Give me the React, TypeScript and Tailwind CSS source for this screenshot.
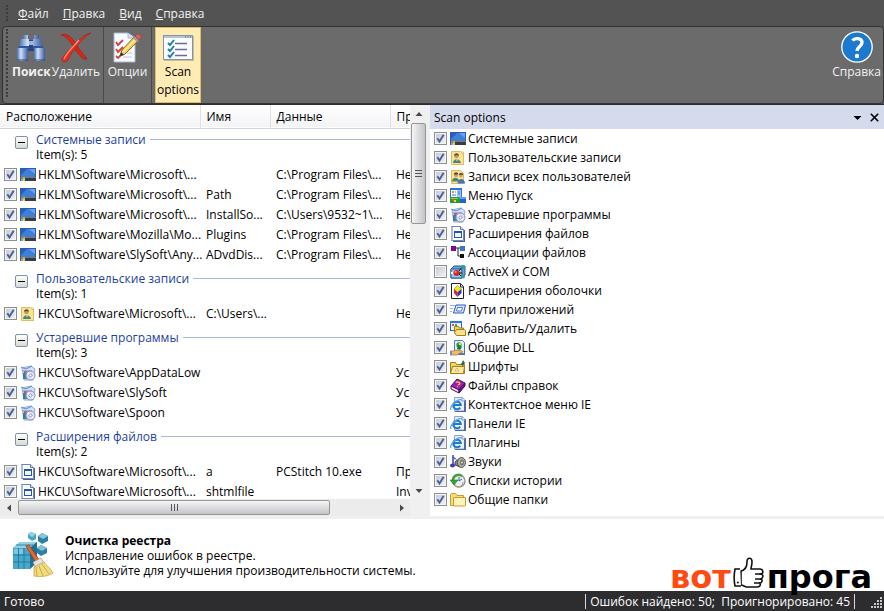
import type { ReactNode } from "react";
import clsx from "clsx";

type IconName =
  | "monitor" | "user" | "users" | "start" | "old" | "file" | "assoc" | "com" | "shell" | "path"
  | "addremove" | "dll" | "fonts" | "help" | "ie" | "sound" | "history" | "folder";

const drawings: Record<IconName, ReactNode> = {
  monitor: (
    <>
      <rect x="0" y="1" width="16" height="13" fill="#2a5db0" />
      <path d="M1 2h14v8H1z" fill="#3f7fd8" />
      <path d="M1 2h6L1 8z" fill="#2a5fb8" />
      <path d="M9 2h6v5z" fill="#6ba4ee" />
      <path d="M5 10h11v4H5z" fill="#3a3a3f" />
      <path d="M5 10h11v1H5z" fill="#77787e" />
      <path d="M1 10h2v2H1z" fill="#e8642c" />
      <path d="M3 10h2v2H3z" fill="#8fd04a" />
      <path d="M1 12h2v2H1z" fill="#5ab4f4" />
      <path d="M3 12h2v2H3z" fill="#f6cf3c" />
    </>
  ),
  user: (
    <>
      <path d="M1.500 1.500h9l3 3v10h-12z" fill="#f8e593" stroke="#dcbc5c" />
      <path d="M11.500 1.500l2 1v12" fill="none" stroke="#dcbc5c" />
      <circle cx="6.500" cy="6" r="2.300" fill="#c39a66" />
      <path d="M4 5.800c0-3.500 5-3.500 5 0L7 5z" fill="#5a4730" />
      <path d="M3 13c0-5 7-5 8 0z" fill="#4f8471" />
      <path d="M6 9.500l1 2 1-2z" fill="#e6efe0" />
    </>
  ),
  users: (
    <>
      <path d="M1.500 1.500h9l3 3v10h-12z" fill="#f8e593" stroke="#dcbc5c" />
      <circle cx="6" cy="6" r="2" fill="#c39a66" />
      <path d="M3.800 5.600c0-3 4.400-3 4.400 0z" fill="#5a4730" />
      <path d="M2 12.500c0-5 7-5 7 0z" fill="#4f8471" />
      <circle cx="11" cy="6.500" r="2" fill="#d1a673" />
      <path d="M8.800 6c0-3 4.400-3 4.400 0z" fill="#6b573e" />
      <path d="M7.500 14.500c0-6 7.500-6 7.500 0z" fill="#4377b5" />
    </>
  ),
  start: (
    <>
      <path d="M0 0h12v11H0z" fill="#2f74d8" />
      <path d="M1 2h6v8H1z" fill="#fff" />
      <path d="M7 2h4v8H7z" fill="#9cc6f6" />
      <path d="M2 3h2v2H2z" fill="#e08a30" />
      <path d="M5 4h1M2 7h4M8 4h2M8 6h2" stroke="#2f74d8" />
      <path d="M0 9h8c3 0 4 3 2 6H0z" fill="#2c9a33" />
      <path d="M1 10h7v1H1z" fill="#7fd07a" />
      <path d="M2 11h2v2H2z" fill="#e8502a" />
      <path d="M4 12h2v2H4z" fill="#f6d53c" />
      <path d="M10 9h6v6h-6z" fill="#1f64cf" />
      <path d="M10 9h6v2h-6z" fill="#62a0ee" />
    </>
  ),
  old: (
    <>
      <path d="M2 3l9-2 4 3-2 11H4z" fill="#cfe0f7" stroke="#8fabd9" />
      <path d="M1 2l5 2 6-3M3 6h9" stroke="#5f8ad0" fill="none" />
      <path d="M3 8h3v6H3z" fill="#3f72c4" />
      <path d="M5 9h3v5H5z" fill="#35a045" />
      <path d="M4 6h3v2H4z" fill="#e0574c" />
      <circle cx="10.500" cy="10.500" r="4.500" fill="#dcdff4" stroke="#8a8ec4" />
      <path d="M8 8l5 5" stroke="#fff" strokeWidth="2" />
      <circle cx="10.500" cy="10.500" r="1.500" fill="#fff" stroke="#8b90c4" />
    </>
  ),
  file: (
    <>
      <path d="M1.500.5h9l3 3v11h-12z" fill="#fff" stroke="#6f86bd" />
      <path d="M10.500.5v3h3" fill="#dbe4f6" stroke="#5a72ad" />
      <path d="M1 1h2v13H1z" fill="#a9bbe4" />
      <rect x="4.500" y="5.500" width="7" height="6" fill="#f2f6ff" stroke="#2554b4" />
      <path d="M4 5h8v2H4z" fill="#2554b4" />
      <path d="M14 4h1v12H3v-1h11z" fill="#4b5f9a" />
    </>
  ),
  assoc: (
    <>
      <path d="M5 3h5M8 3v8h2" stroke="#222" fill="none" />
      <path d="M1 1h5v5H1z" fill="#7d0a86" />
      <path d="M10 1h5v5h-5z" fill="#3d74cc" />
      <path d="M10 9h4v4h-4z" fill="#111" />
    </>
  ),
  com: (
    <>
      <path d="M1 5l3-3h11v9l-3 3H1z" fill="#6ea3dc" stroke="#2b568f" />
      <path d="M1 5h11v9H1z" fill="#9bc5ee" stroke="#2b568f" />
      <circle cx="6.500" cy="9" r="3" fill="#d52a1e" />
      <circle cx="5.700" cy="8" r="1" fill="#ff9a86" />
      <path d="M9 9h3M12 3l-3 4M12 13l-3-3" stroke="#111" />
      <circle cx="13" cy="3" r="2" fill="#25a58a" />
      <circle cx="13" cy="12.500" r="2" fill="#25a58a" />
      <path d="M1 8h2v2H1z" fill="#fff" />
    </>
  ),
  shell: (
    <>
      <path d="M1.500.5h9l3 3v12h-12z" fill="#fff" stroke="#222" />
      <path d="M10.500 1v3h3" fill="none" stroke="#222" />
      <path d="M7.500 2.500l4 3.500-4 3.500L4 6z" fill="#f7e626" stroke="#8a7a10" strokeWidth=".5" />
      <path d="M4 6l3.500 3.500V14L4 10z" fill="#d8231d" />
      <path d="M11.500 6l-4 3.500V14l4-4z" fill="#2633c8" />
    </>
  ),
  path: (
    <>
      <path d="M0 3.500h5M0 6.500h3M0 9.500h2" stroke="#9db1d6" />
      <path d="M6 3h9.500l-2 8H3.500z" fill="#dce8fb" stroke="#2857b8" />
      <path d="M7.500 5.500h5l-1 3.500H6.500z" fill="#fff" stroke="#4c7bd4" />
    </>
  ),
  addremove: (
    <>
      <rect x=".5" y=".5" width="11" height="9" fill="#e9f1fd" stroke="#2464cf" />
      <path d="M0 0h12v2H0z" fill="#2f77e4" />
      <path d="M2 3h2v2H2z" fill="#e35632" />
      <path d="M5 3h2v2H5z" fill="#47a447" />
      <path d="M4.500 5.500h4l1 1.500h4v5h-9z" fill="#f4d462" stroke="#a87b16" />
      <path d="M6.500 8.500h8l1 1v5h-9l-2-3z" fill="#fbe48a" stroke="#a87b16" />
    </>
  ),
  dll: (
    <>
      <path d="M4.500.5h8l2 2v11h-10z" fill="#e4effd" stroke="#5c7cb8" />
      <path d="M14 3h1v12H8v-1h6z" fill="#566fa5" />
      <circle cx="9" cy="5" r="2.700" fill="#34a03c" />
      <path d="M8 5l4 2-2 3-3-1z" fill="#1d7a36" />
      <path d="M9 3h2v2H9z" fill="#c7e46c" />
      <path d="M0 11h3l3-1 6 1c2 1 0 2-2 2l-3 2H0z" fill="#ecba72" stroke="#a5702e" strokeWidth=".7" />
      <path d="M0 11h2v4H0z" fill="#6d8fc9" />
    </>
  ),
  fonts: (
    <>
      <path d="M.5 3.500h5l1 2h8v9H.5z" fill="#f6d566" stroke="#a67b1e" />
      <path d="M2.500 7.500h12l-1 7H.5z" fill="#fdeb9c" stroke="#a67b1e" />
      <path d="M10 5c2 0 2-2 3-4l2 3-2 3z" fill="#2e6b39" />
      <path d="M5 12l2-3 2 3z" fill="#fff" stroke="#b98f2c" strokeWidth=".6" />
    </>
  ),
  help: (
    <>
      <path d="M7 1l8 4-6 7-8-4z" fill="#a31fb2" stroke="#4f0a5e" />
      <path d="M1 8l8 4v3L1 11z" fill="#f0e6f2" stroke="#4f0a5e" />
      <path d="M15 5v3l-6 7v-3z" fill="#6d1080" stroke="#4f0a5e" />
      <path d="M6 4.500c1-1.500 5 0 3.500 1.500L8 7M7 8.500l.8.400" fill="none" stroke="#f8d63c" strokeWidth="1.200" />
    </>
  ),
  ie: (
    <>
      <path d="M4.500.5h8l2 2.500v11h-10z" fill="#eaf1fd" stroke="#8aa2d4" />
      <path d="M14 3h2v12H5v-1h9z" fill="#5269a4" />
      <path d="M12 1v3h3" fill="#fff" stroke="#7a93c8" />
      <path d="M10.200 10.600A3.800 3.800 0 1 1 10.800 8H4" fill="none" stroke="#1c78d2" strokeWidth="2" />
      <path d="M1 13C-1 10 7 1 12 3" fill="none" stroke="#55a9ea" strokeWidth="1.200" />
    </>
  ),
  sound: (
    <>
      <path d="M3 1v9" stroke="#3b3fae" strokeWidth="1.500" />
      <path d="M3 1c1 3 4 3 4 6-1-2-3-2-4-2z" fill="#5a60d0" />
      <ellipse cx="2.500" cy="11.500" rx="2.500" ry="2" fill="#3b3fae" />
      <path d="M5 8l5-4v9l-5-2z" fill="#85858a" stroke="#4b4b50" />
      <ellipse cx="11.500" cy="8.500" rx="4" ry="5" fill="#b5b2a8" stroke="#55534e" />
      <ellipse cx="12" cy="8.500" rx="2" ry="3" fill="#77746a" />
      <circle cx="12" cy="8.500" r="1" fill="#e2dfd0" />
    </>
  ),
  history: (
    <>
      <circle cx="9" cy="8" r="6" fill="#e8f0f4" stroke="#8b979e" strokeWidth="1.400" />
      <path d="M9 4v4l3-2" fill="none" stroke="#3b5f8a" />
      <path d="M13 9a5 5 0 0 1-8 4" fill="none" stroke="#b9a266" />
      <path d="M12 3C8 0 3 3 3 7" fill="none" stroke="#3fa33c" strokeWidth="2.400" />
      <path d="M0 7h8l-4 5z" fill="#3fa33c" stroke="#1f7424" strokeWidth=".6" />
    </>
  ),
  folder: (
    <>
      <path d="M.5 2.500l1-1h4l1.500 2h6.500v10H.5z" fill="#f8dc78" stroke="#c99b30" />
      <path d="M3.500 5.500h12v8l-1 .5h-11z" fill="#fdf4b8" stroke="#c99b30" />
    </>
  ),
};

function Icon({ name }: { name: IconName }) {
  return (
    <svg viewBox="0 0 16 16" className="h-4 w-4 shrink-0" aria-hidden="true">
      {drawings[name]}
    </svg>
  );
}

function Check({ id, label, checked = true }: { id: string; label?: string; checked?: boolean }) {
  return (
    <span className="grid h-[13px] w-[13px] shrink-0">
      <input
        id={id}
        type="checkbox"
        defaultChecked={checked}
        aria-label={label}
        className="peer col-start-1 row-start-1 h-[13px] w-[13px] appearance-none border border-[#8e8f8f] bg-linear-to-br from-[#c3c8cf] to-[#f4f5f6] outline outline-1 -outline-offset-2 outline-[#f4f4f4]"
      />
      <svg
        viewBox="0 0 13 13"
        aria-hidden="true"
        className="pointer-events-none invisible col-start-1 row-start-1 h-[13px] w-[13px] peer-checked:visible"
      >
        <path d="M3.300 6.300l2.200 3.200L9.700 2.800" fill="none" stroke="#4a5f97" strokeWidth="1.900" />
      </svg>
    </span>
  );
}

const menu = ["Файл", "Правка", "Вид", "Справка"];

interface Entry {
  key: string;
  name?: string;
  data?: string;
  problem: string;
}

const groups: { title: string; icon: IconName; entries: Entry[] }[] = [
  {
    title: "Системные записи",
    icon: "monitor",
    entries: [
      { key: "HKLM\\Software\\Microsoft\\...", data: "C:\\Program Files\\...", problem: "Не" },
      { key: "HKLM\\Software\\Microsoft\\...", name: "Path", data: "C:\\Program Files\\...", problem: "Не" },
      { key: "HKLM\\Software\\Microsoft\\...", name: "InstallSo...", data: "C:\\Users\\9532~1\\...", problem: "Не" },
      { key: "HKLM\\Software\\Mozilla\\Mo...", name: "Plugins", data: "C:\\Program Files\\...", problem: "Не" },
      { key: "HKLM\\Software\\SlySoft\\Any...", name: "ADvdDis...", data: "C:\\Program Files\\...", problem: "Не" },
    ],
  },
  {
    title: "Пользовательские записи",
    icon: "user",
    entries: [{ key: "HKCU\\Software\\Microsoft\\...", name: "C:\\Users\\...", problem: "Не" }],
  },
  {
    title: "Устаревшие программы",
    icon: "old",
    entries: [
      { key: "HKCU\\Software\\AppDataLow", problem: "Ус" },
      { key: "HKCU\\Software\\SlySoft", problem: "Ус" },
      { key: "HKCU\\Software\\Spoon", problem: "Ус" },
    ],
  },
  {
    title: "Расширения файлов",
    icon: "file",
    entries: [
      { key: "HKCU\\Software\\Microsoft\\...", name: "a", data: "PCStitch 10.exe", problem: "Пр" },
      { key: "HKCU\\Software\\Microsoft\\...", name: "shtmlfile", problem: "Inv" },
    ],
  },
];

const options: { label: string; icon: IconName; off?: boolean }[] = [
  { label: "Системные записи", icon: "monitor" },
  { label: "Пользовательские записи", icon: "user" },
  { label: "Записи всех пользователей", icon: "users" },
  { label: "Меню Пуск", icon: "start" },
  { label: "Устаревшие программы", icon: "old" },
  { label: "Расширения файлов", icon: "file" },
  { label: "Ассоциации файлов", icon: "assoc" },
  { label: "ActiveX и COM", icon: "com", off: true },
  { label: "Расширения оболочки", icon: "shell" },
  { label: "Пути приложений", icon: "path" },
  { label: "Добавить/Удалить", icon: "addremove" },
  { label: "Общие DLL", icon: "dll" },
  { label: "Шрифты", icon: "fonts" },
  { label: "Файлы справок", icon: "help" },
  { label: "Контектсное меню IE", icon: "ie" },
  { label: "Панели IE", icon: "ie" },
  { label: "Плагины", icon: "ie" },
  { label: "Звуки", icon: "sound" },
  { label: "Списки истории", icon: "history" },
  { label: "Общие папки", icon: "folder" },
];

function Binoculars() {
  return (
    <svg viewBox="0 0 32 32" className="h-8 w-8" aria-hidden="true">
      <defs>
        <linearGradient id="barrel">
          <stop offset="0" stopColor="#4a6fb4" />
          <stop offset=".35" stopColor="#cfe0fa" />
          <stop offset="1" stopColor="#3a5c9e" />
        </linearGradient>
      </defs>
      <path d="M13 9h6v11h-6z" fill="#2a4580" />
      <path d="M14 10h4v4h-4z" fill="#9db7e4" />
      <path d="M8 4h5v4H8zM19 4h5v4h-5z" fill="url(#barrel)" />
      <path d="M6 8h8v8H4zM18 8h8l2 8H18z" fill="url(#barrel)" />
      <path d="M4 15h10v3H3zM18 15h10l1 3H18z" fill="#35579a" />
      <rect x="2" y="17" width="11" height="13" rx="1" fill="url(#barrel)" />
      <rect x="19" y="17" width="11" height="13" rx="1" fill="url(#barrel)" />
      <path d="M2 29h11M19 29h11" stroke="#29447e" />
    </svg>
  );
}

function Cross() {
  return (
    <svg viewBox="0 0 32 32" className="h-8 w-8" aria-hidden="true">
      <path d="M1 4C8 1 13 8 18 16c3 5 7 9 9 12-4 1-6-2-11-8C11 12 8 6 1 4z" fill="#d92516" stroke="#a51a0e" strokeWidth=".6" />
      <path d="M31 2C24 3 18 10 12 16 7 21 3 25 2 29c1 3 5 2 6 0 2-5 5-9 9-14C21 10 25 5 31 2z" fill="#e5311f" stroke="#a51a0e" strokeWidth=".6" />
      <path d="M4 28c3-7 9-12 15-19" fill="none" stroke="#ff8a72" strokeWidth="1.400" />
    </svg>
  );
}

function Options() {
  return (
    <svg viewBox="0 0 32 32" className="h-8 w-8" aria-hidden="true">
      <path d="M3 2h14l7 5v24H3z" fill="#f8fbff" stroke="#a7b7cf" />
      <path d="M17 2v5h7" fill="#d4e0f0" stroke="#a7b7cf" />
      <path d="M12 17h9M12 22h9M12 26h9" stroke="#b9c7da" />
      <path d="M5 11l2 3 5-5M5 18l2 3 5-5M5 25l2 2 4-4" fill="none" stroke="#d3413d" strokeWidth="1.800" />
      <path d="M9 25l2-6L24 5l4 4-14 14z" fill="#f3cf5b" stroke="#8d6a22" />
      <path d="M12 21L26 7" stroke="#fff0a8" strokeWidth="1.500" />
      <path d="M9 25l1-4 3 3z" fill="#3a2f28" />
      <path d="M22 7l4 4 2-2-4-4z" fill="#8f9b9e" />
      <path d="M24 5l2-2c2-1 5 2 4 4l-2 2z" fill="#d5615c" stroke="#8e3431" strokeWidth=".6" />
    </svg>
  );
}

function Checklist() {
  return (
    <svg viewBox="0 0 32 32" className="h-8 w-8" aria-hidden="true">
      <path d="M2 5h30v25H2z" fill="#8a8674" opacity=".45" />
      <rect x="1.500" y="4.500" width="29" height="24" fill="#fafcff" stroke="#8794a6" />
      <path d="M2 5h28v2H2z" fill="#b6c3d4" />
      <path d="M23 6h1M25.500 6h1M28 6h1" stroke="#4f5d73" />
      <path d="M13 12.500h12M13 18.500h12M13 24.500h12" stroke="#6b6b95" strokeWidth="1.500" />
      <path d="M6 12l2 2 4-5M6 18l2 2 4-5M6 24l2 2 4-5" fill="none" stroke="#1d7fae" strokeWidth="2" />
    </svg>
  );
}

function Question() {
  return (
    <svg viewBox="0 0 32 32" className="h-8 w-8" aria-hidden="true">
      <circle cx="16" cy="16" r="15.200" fill="#1a7ad0" stroke="#fff" strokeWidth="1.300" />
      <path d="M11.500 9.500C14 6.500 21 7 21 11.500c0 4-5 4-5 8.500" fill="none" stroke="#fff" strokeWidth="3.400" />
      <circle cx="16" cy="25" r="2.200" fill="#fff" />
    </svg>
  );
}

function RegistryBroom() {
  return (
    <svg viewBox="0 0 44 48" className="h-12 w-11 shrink-0" aria-hidden="true">
      <path d="M2 17l7-6h17v20l-7 7H2z" fill="#2b83a8" />
      <path d="M2 17h17v21H2z" fill="#47a8cd" />
      <path d="M9 11h17l-7 6H2z" fill="#8ed0e6" />
      <path d="M19 17l7-6v20l-7 7z" fill="#23708f" />
      <path d="M7.500 17v21M13 17v21M2 24h17l7-7M2 31h17l7-7M5 14h17" fill="none" stroke="#256f91" strokeWidth=".8" />
      <path d="M3 18h4v5H3zM8 18h4v5H8z" fill="#7cc6e0" />
      <path d="M20 1l5 2v5l-4 2-4-3v-4z" fill="#4aa7ca" />
      <path d="M20 1l5 2-4 3-4-3z" fill="#93d2e6" />
      <path d="M31 2l6 3v5l-6 3-4-3V5z" fill="#2c7fa3" />
      <path d="M31 2l6 3-5 3-5-3z" fill="#83c9e0" />
      <path d="M30 14l6 3v5l-6 3-4-3v-5z" fill="#2c7fa3" />
      <path d="M30 14l6 3-5 3-5-3z" fill="#79c3dc" />
      <path d="M15 15l3-1 11 16-4 2z" fill="#e06a35" stroke="#8c3513" strokeWidth=".7" />
      <path d="M22 31l8-4 3 5-9 4z" fill="#e3e4e6" stroke="#888" strokeWidth=".6" />
      <path d="M23 36l10-5c3 4 7 7 9 11-6 4-13 4-19 3z" fill="#f3dc80" stroke="#c09a36" strokeWidth=".7" />
      <path d="M25 36l1 9M28 35l4 10M31 33l7 10" stroke="#c09a36" strokeWidth=".8" />
    </svg>
  );
}

function Thumb() {
  return (
    <svg viewBox="0 0 32 32" className="h-8 w-8" aria-hidden="true">
      <path
        d="M8 14c4-1 6-5 6-9 0-5 5-5 5 0 0 3-1 5-1 7h9c3 0 4 4 1 5 3 1 2 4 0 5 2 1 1 4-1 4 1 3-1 4-3 4H14c-3 0-3-2-6-2z"
        fill="#fff" stroke="#111" strokeWidth="1.600"
      />
      <path d="M22 17h6M22 22h6M21 26h6" stroke="#111" strokeWidth="1.400" />
      <path d="M7 12H2c-1 5-1 12 0 17h6" fill="#fff" stroke="#111" strokeWidth="1.600" />
      <circle cx="4.800" cy="25.500" r="1" fill="#111" />
    </svg>
  );
}

function ToolButton({ icon, bold, children }: { icon: ReactNode; bold?: boolean; children: ReactNode }) {
  return (
    <button type="button" className="flex flex-col items-center pt-1 text-[#f2f2f2]">
      {icon}
      <span className={clsx("leading-[18px] whitespace-nowrap", bold && "font-bold")}>{children}</span>
    </button>
  );
}

function Arrow({ d }: { d: string }) {
  return (
    <svg viewBox="0 0 8 8" className="h-2 w-2" aria-hidden="true">
      <path d={d} fill="#4a4a4a" />
    </svg>
  );
}

export default function App() {
  return (
    <div className="flex h-screen min-w-[640px] flex-col bg-[#f0f0f0] font-['Open_Sans','Noto_Sans',sans-serif] text-[12px] leading-[15px] text-black">
      <header className="bg-[#535353]">
        <nav className="flex h-[26px] items-center pl-1.5">
          <span className="h-4 border-l-2 border-dotted border-[#3c3c3c]" />
          <div className="flex gap-[14px] pl-2.5">
            {menu.map((item) => (
              <button key={item} type="button" className="text-[#f2f2f2]">
                <span className="underline">{item[0]}</span>
                {item.slice(1)}
              </button>
            ))}
          </div>
        </nav>
        <div className="ml-0.5 flex h-[78px] rounded border border-[#333] bg-[#6b6b6b]">
          <span className="my-0.5 ml-[3px] h-[68px] border-l-2 border-dotted border-[#3c3c3c]" />
          <div className="flex grow pl-1">
            <div className="flex w-[88px] justify-between">
              <ToolButton icon={<Binoculars />} bold>Поиск</ToolButton>
              <ToolButton icon={<Cross />}>Удалить</ToolButton>
            </div>
            <div className="ml-[3px] flex w-[49px] justify-center border-x border-[#4a4a4a]">
              <ToolButton icon={<Options />}>Опции</ToolButton>
            </div>
            <button
              type="button"
              className="ml-[3px] flex w-[46px] flex-col items-center border border-[#e3bd66] bg-[#ffecb5] pt-[3px] leading-[18px]"
            >
              <Checklist />
              Scan
              <br />
              options
            </button>
          </div>
          <div className="flex pr-0.5">
            <ToolButton icon={<Question />}>Справка</ToolButton>
          </div>
        </div>
        <div className="h-px bg-[#2d2a32]" />
      </header>

      <main className="flex min-h-0 flex-1">
        <section className="flex w-[430px] shrink-0 flex-col pr-[3px]">
          <div className="flex min-h-0 flex-1">
            <div className="min-w-0 flex-1 overflow-hidden bg-white">
              <table className="w-[490px] table-fixed border-collapse text-left whitespace-nowrap">
                <colgroup>
                  <col className="w-[200px]" />
                  <col className="w-[70px]" />
                  <col className="w-[120px]" />
                  <col />
                </colgroup>
                <thead>
                  <tr className="h-[23px] border-b border-[#d5d5d5] bg-linear-to-b from-white to-[#f3f4f6]">
                    {["Расположение", "Имя", "Данные", "Проблема"].map((h) => (
                      <th key={h} className="border-r border-[#dfe1e4] p-0 pl-1.5 font-normal">{h}</th>
                    ))}
                  </tr>
                </thead>
                {groups.map((group, g) => (
                  <tbody key={group.title}>
                    <tr>
                      <th colSpan={4} className={clsx("p-0 pb-[3px] pl-[15px] font-normal", g === 0 ? "pt-[3px]" : "pt-[6px]")}>
                        <div className="flex items-start gap-2">
                          <button
                            type="button"
                            aria-label="Свернуть"
                            className="mt-1 grid h-[13px] w-[13px] place-items-center rounded-xs border border-[#7f93a8] bg-linear-to-b from-white to-[#d9d9d2]"
                          >
                            <span className="h-px w-[7px] bg-black" />
                          </button>
                          <div className="min-w-0 flex-1">
                            <div className="flex items-center gap-1">
                              <span className="text-[#1e3f9c]">{group.title}</span>
                              <span className="h-px flex-1 bg-[#a9b9dd]" />
                            </div>
                            <div>Item(s): {group.entries.length}</div>
                          </div>
                        </div>
                      </th>
                    </tr>
                    {group.entries.map((entry, i) => (
                      <tr key={i} className="h-5">
                        <td className="p-0 pl-1">
                          <div className="flex items-center">
                            <Check id={`entry-${g}-${i}`} label={entry.key} />
                            <span className="mr-0.5 ml-[3px] flex"><Icon name={group.icon} /></span>
                            {entry.key}
                          </div>
                        </td>
                        <td className="p-0 pl-1.5">{entry.name}</td>
                        <td className="p-0 pl-1.5">{entry.data}</td>
                        <td className="p-0 pl-1.5">{entry.problem}</td>
                      </tr>
                    ))}
                  </tbody>
                ))}
              </table>
            </div>
            <div className="flex w-[17px] flex-col bg-[#f0f0f0]">
              <button type="button" aria-label="Вверх" className="grid h-[18px] place-items-center">
                <Arrow d="M.5 6L4 2l3.500 4z" />
              </button>
              <div className="flex-1 px-px">
                <div className="flex h-[101px] flex-col items-center justify-center gap-0.5 rounded-xs border border-[#979797] bg-linear-to-r from-[#f5f5f5] to-[#c4c5c9]">
                  <span className="h-px w-[7px] bg-[#555]" />
                  <span className="h-px w-[7px] bg-[#555]" />
                  <span className="h-px w-[7px] bg-[#555]" />
                </div>
              </div>
              <button type="button" aria-label="Вниз" className="grid h-[17px] place-items-center">
                <Arrow d="M.5 2h7L4 6z" />
              </button>
            </div>
          </div>
          <div className="mr-[17px] flex h-[17px] bg-[#ececec]">
            <button type="button" aria-label="Влево" className="grid w-[18px] place-items-center">
              <Arrow d="M6 .5v7L2 4z" />
            </button>
            <div className="flex-1 py-px">
              <div className="flex h-[15px] w-[312px] items-center justify-center gap-0.5 rounded-xs border border-[#979797] bg-linear-to-b from-[#f5f5f5] to-[#c4c5c9]">
                <span className="h-[7px] w-px bg-[#555]" />
                <span className="h-[7px] w-px bg-[#555]" />
                <span className="h-[7px] w-px bg-[#555]" />
              </div>
            </div>
            <button type="button" aria-label="Вправо" className="grid w-[17px] place-items-center">
              <Arrow d="M2 .5L6 4 2 7.500z" />
            </button>
          </div>
          <div className="h-[3px]" />
        </section>

        <section className="mb-[3px] min-w-0 flex-1 overflow-hidden bg-white">
          <div className="flex h-6 items-center bg-[#d5dbed] pr-[5px] pl-1">
            <h2 className="flex-1">Scan options</h2>
            <button type="button" aria-label="Меню" className="mr-2">
              <svg viewBox="0 0 9 9" className="h-[9px] w-[9px]" aria-hidden="true">
                <path d="M.5 3h8l-4 4z" />
              </svg>
            </button>
            <button type="button" aria-label="Закрыть">
              <svg viewBox="0 0 9 9" className="h-[9px] w-[9px]" aria-hidden="true">
                <path d="M.8.8l7.400 7.400M8.200.8L.8 8.200" stroke="#000" strokeWidth="1.600" />
              </svg>
            </button>
          </div>
          <ul>
            {options.map((option, i) => (
              <li key={option.label} className="flex h-[19px] items-center pl-1">
                <Check id={`option-${i}`} checked={!option.off} />
                <label htmlFor={`option-${i}`} className="flex items-center gap-0.5 pl-[3px]">
                  <Icon name={option.icon} />
                  {option.label}
                </label>
              </li>
            ))}
          </ul>
        </section>
      </main>

      <section className="relative flex h-[72px] shrink-0 items-center bg-white pl-[11px]">
        <RegistryBroom />
        <div className="pl-2.5">
          <h1 className="font-bold">Очистка реестра</h1>
          <p>Исправление ошибок в реестре.</p>
          <p>Используйте для улучшения производительности системы.</p>
        </div>
        <div className="absolute right-3 -bottom-1 flex items-end font-['DejaVu_Sans'] text-[32px] leading-[36px] font-bold">
          <span className="text-[#ff4a12]">вот</span>
          <span className="mx-0.5 mb-1.5"><Thumb /></span>
          <span>прога</span>
        </div>
      </section>

      <footer className="flex h-5 shrink-0 items-center bg-[#2d2d30] pl-1 text-white">
        <span className="flex-1">Готово</span>
        <span className="border-x border-[#d8d8d8] px-1 whitespace-pre">Ошибок найдено: 50;  Проигнорировано: 45</span>
        <svg viewBox="0 0 12 12" className="mt-1 mr-px ml-4 h-3 w-3" aria-hidden="true">
          <path d="M9 0h2v2H9zM6 3h2v2H6zM9 3h2v2H9zM3 6h2v2H3zM6 6h2v2H6zM9 6h2v2H9zM0 9h2v2H0zM3 9h2v2H3zM6 9h2v2H6zM9 9h2v2H9z" fill="#c8c8c8" />
        </svg>
      </footer>
    </div>
  );
}
